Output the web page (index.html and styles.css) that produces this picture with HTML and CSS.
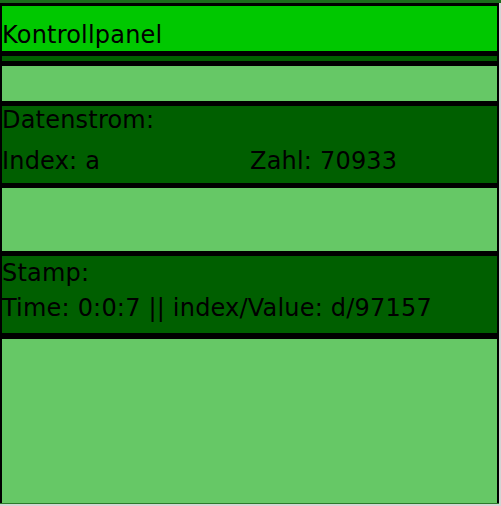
FILE: index.html
```html
<!DOCTYPE html>
<html lang="de">
<head>
    <meta charset="UTF-8">
    <meta name="viewport" content="width=device-width, initial-scale=1.0">
    <title>Kontrollpanel</title>
    <link rel="stylesheet" href="styles.css">
</head>
<body>
    <div class="top-strip"></div>
    <div class="frame">
        <div class="header">Kontrollpanel</div>
        <div class="spacer"></div>
        <div class="slot slot-small"></div>
        <div class="panel panel-stream">
            <div class="line">Datenstrom:</div>
            <div class="line line-split">
                <span>Index: a</span>
                <span>Zahl: 70933</span>
            </div>
        </div>
        <div class="slot slot-mid"></div>
        <div class="panel panel-stamp">
            <div class="line">Stamp:</div>
            <div class="line">Time: 0:0:7 || index/Value: d/97157</div>
        </div>
        <div class="slot slot-rest"></div>
    </div>
    <div class="bottom-line"></div>
</body>
</html>
```

FILE: styles.css
```css
html, body {
    height: 100%;
}

body {
    margin: 0;
    display: flex;
    flex-direction: column;
    background-color: #d4d4d4;
    font-family: "DejaVu Sans", Verdana, sans-serif;
    font-size: 24px;
    line-height: 28px;
    letter-spacing: 0.2px;
    color: #000;
}

.top-strip {
    height: 3px;
    background-color: #1c6c1c;
}

.frame {
    width: 495px;
    height: 500px;
    display: flex;
    flex-direction: column;
    border-left: 2px solid #000;
    border-right: 2px solid #000;
    background-color: #66c866;
}

.header {
    height: 30px;
    padding-top: 15px;
    border-top: 3px solid #000;
    border-bottom: 5px solid #000;
    background-color: #00c800;
}

.spacer {
    height: 5px;
    background-color: #005f00;
}

.slot {
    background-color: #66c866;
}

.slot-small {
    height: 35px;
    border-top: 5px solid #000;
    border-bottom: 5px solid #000;
}

.slot-mid {
    height: 63px;
    border-top: 5px solid #000;
    border-bottom: 5px solid #000;
}

.slot-rest {
    flex: 1;
    border-top: 6px solid #000;
}

.panel {
    height: 77px;
    box-sizing: border-box;
    background-color: #005f00;
}

.panel-stream .line + .line {
    margin-top: 13px;
}

.panel-stamp {
    padding-top: 3px;
}

.panel-stamp .line + .line {
    margin-top: 7px;
}

.line-split {
    display: grid;
    grid-template-columns: 248px 1fr;
}

.bottom-line {
    width: 499px;
    height: 1px;
    background-color: #2a7a2a;
}
```
